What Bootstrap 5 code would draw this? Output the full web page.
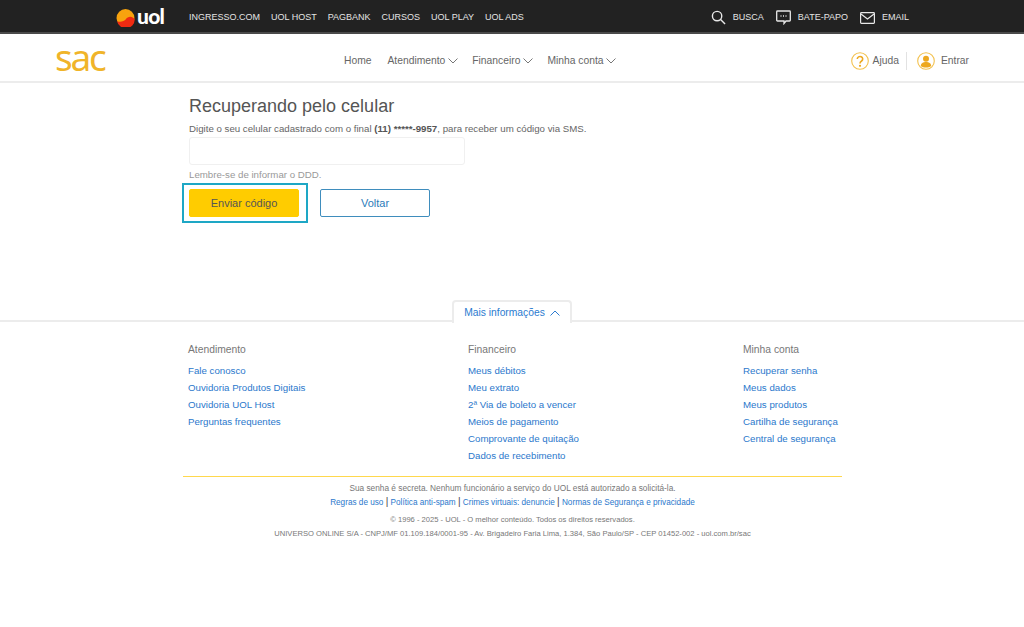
<!DOCTYPE html>
<html lang="pt-BR">
<head>
<meta charset="utf-8">
<title>SAC UOL</title>
<link href="https://cdn.jsdelivr.net/npm/bootstrap@5.3.0/dist/css/bootstrap.min.css" rel="stylesheet">
<style>
html,body{height:627px;overflow:hidden}
body{font-family:"Liberation Sans",Arial,sans-serif;color:#666;background:#fff;font-size:10.3px}
a{text-decoration:none}
.topbar{height:34px;background:#222;border-bottom:2px solid #4a4a4a;padding:3px 0 0 116px;color:#e4e4e4;font-size:9px}
.uol-logo{width:73px;gap:2px}
.uol-word{font-family:"Lato","Liberation Sans",sans-serif;font-weight:900;font-size:21px;color:#fff;letter-spacing:-.7px;line-height:1;margin-top:-4px}
.toplinks{gap:11px}
.toplinks a,.topright a{color:#e4e4e4}
.topright{margin-left:auto;margin-right:115px;gap:12px}
.topright a{display:flex;align-items:center;gap:7px}
.mainbar{height:49px;border-bottom:2px solid #ececec;padding-top:6px}
.sac-logo{font-family:"Noto Sans",sans-serif;font-size:37px;color:#f0b429;line-height:1;margin-left:55px;width:289px;margin-top:-9px;letter-spacing:-2.2px}
.mainnav{font-size:10.3px;gap:14px}
.mainnav a,.usernav a{color:#666;display:flex;align-items:center;gap:3px}
.mainnav a:first-child{margin-right:2px}
.usernav{margin-left:auto;margin-right:55px;font-size:10.3px}
.usernav a.q{gap:4px}
.usernav a.u{gap:6px}
.usernav .sepline{width:1px;height:18px;background:#e2e2e2;margin:0 10px 0 7px}
.content{padding-left:189px;height:218px}
.pagetitle{font-size:18px;font-weight:400;color:#555;margin:0;padding-top:13px;line-height:21px}
.hint{font-size:9.7px;line-height:13px;margin:5px 0 0;color:#666}
.hint b{color:#555}
.phone{display:block;width:276px;height:28px;border:1px solid #f0f0f0;border-radius:3px;margin-top:2px;background:#fff}
.ddd{font-size:9.7px;color:#999;margin:3px 0 0;line-height:13px}
.actions{margin-top:2px;margin-left:-7px;gap:12px}
.focusbox{border:2px solid #1ea7c5;padding:4px 7px 4px 5px}
.btn-send,.btn-back{width:110px;height:28px;padding:0;font-size:11px;border-radius:2px;line-height:26px}
.btn-send{background:#fc0;border:1px solid #fc0;color:#555}
.btn-back{background:#fff;border:1px solid #3f8dbd;color:#2b7bb9;margin-top:6px}
.tabline{height:21px;border-bottom:2px solid #ececec;padding-left:452px}
.moretab{display:flex;align-items:center;justify-content:center;gap:5px;width:120px;height:23px;background:#fff;border:2px solid #ececec;border-bottom:0;border-radius:4px 4px 0 0;color:#2b7bd0;font-size:10.3px;position:relative;top:-1px}
.foot-cols{padding:21px 0 0 188px;height:154px}
.foot-col h6{font-size:10.3px;font-weight:400;color:#777;margin:0 0 5px;line-height:14px}
.foot-col a{display:block;color:#2b78cc;font-size:9.7px;line-height:17px}
.c1{width:280px}.c2{width:275px}
.legal{border-top:1px solid #ffd84d;margin:0 182px 0 183px;padding-top:5px;text-align:center;font-size:8.3px;color:#777;height:70px}
.legal p{margin:0;line-height:12px}
.legal .lk{margin-top:2px;font-size:8.2px}
.legal .lk a{color:#2b78cc}
.legal .lk i{font-style:normal;color:#444;font-size:10px}
.legal .cp{margin-top:5px;font-size:7.6px}
.legal .un{margin-top:2px;font-size:7.6px}
</style>
</head>
<body>
<header class="topbar d-flex align-items-center">
  <a class="uol-logo d-flex align-items-center" href="#">
    <svg width="19" height="18" viewBox="0 0 18 17"><circle cx="9" cy="8.500" r="8.500" fill="#f8a30e"/><path d="M1 11.500a8.500 8.500 0 0 0 16.800-1.500C15.500 6 11 7 9.500 9.500 7.500 12 4 12.500 1 11.500z" fill="#ef2b12"/></svg>
    <span class="uol-word">uol</span>
  </a>
  <nav class="toplinks d-flex">
    <a href="#">INGRESSO.COM</a><a href="#">UOL HOST</a><a href="#">PAGBANK</a><a href="#">CURSOS</a><a href="#">UOL PLAY</a><a href="#">UOL ADS</a>
  </nav>
  <nav class="topright d-flex">
    <a href="#"><svg width="15" height="15" viewBox="0 0 16 16" fill="none" stroke="#e8e8e8" stroke-width="1.500"><circle cx="6.500" cy="6.500" r="5"/><path d="M10.200 10.200 15 15"/></svg>BUSCA</a>
    <a href="#"><svg width="15" height="15" viewBox="0 0 15 15" fill="none" stroke="#e8e8e8" stroke-width="1.300"><path d="M1.500 1h12a.8.8 0 0 1 .8.8v8.400a.8.8 0 0 1-.8.8H10l-2 2.500V11H1.500a.8.8 0 0 1-.8-.8V1.800a.8.8 0 0 1 .8-.8z"/><path d="M4.500 6h1M7 6h1M9.500 6h1" stroke-width="1.500"/></svg>BATE-PAPO</a>
    <a href="#"><svg width="15" height="12" viewBox="0 0 15 12" fill="none" stroke="#e8e8e8" stroke-width="1.200"><rect x=".6" y=".6" width="13.800" height="10.800" rx=".8"/><path d="m1 2 6.500 5L14 2"/></svg>EMAIL</a>
  </nav>
</header>
<div class="mainbar d-flex align-items-center">
  <a class="sac-logo" href="#">sac</a>
  <nav class="mainnav d-flex">
    <a href="#">Home</a>
    <a href="#">Atendimento <svg width="10" height="6" viewBox="0 0 10 6" fill="none" stroke="#777"><path d="m.5.500 4.500 4.500L9.500.500"/></svg></a>
    <a href="#">Financeiro <svg width="10" height="6" viewBox="0 0 10 6" fill="none" stroke="#777"><path d="m.5.500 4.500 4.500L9.500.500"/></svg></a>
    <a href="#">Minha conta <svg width="10" height="6" viewBox="0 0 10 6" fill="none" stroke="#777"><path d="m.5.500 4.500 4.500L9.500.500"/></svg></a>
  </nav>
  <nav class="usernav d-flex align-items-center">
    <a href="#" class="q"><svg width="18" height="18" viewBox="0 0 18 18"><circle cx="9" cy="9" r="8.300" fill="none" stroke="#f3c14d" stroke-width="1.100"/><path d="M6.300 7a2.700 2.500 0 1 1 4.300 2c-1 .7-1.600 1.200-1.600 2.400" fill="none" stroke="#eda81f" stroke-width="1.600"/><circle cx="9" cy="13.800" r="1.100" fill="#eda81f"/></svg>Ajuda</a>
    <span class="sepline"></span>
    <a href="#" class="u"><svg width="18" height="18" viewBox="0 0 18 18"><circle cx="9" cy="9" r="8.300" fill="none" stroke="#f3c14d" stroke-width="1.100"/><circle cx="9" cy="6.800" r="3" fill="#eda81f"/><path d="M3.800 14c0-2.800 2.400-4 5.200-4s5.200 1.200 5.200 4c-1.400 1-3.200 1.500-5.200 1.500S5.200 15 3.800 14z" fill="#eda81f"/></svg>Entrar</a>
  </nav>
</div>
<main class="content">
  <h1 class="pagetitle">Recuperando pelo celular</h1>
  <p class="hint">Digite o seu celular cadastrado com o final <b>(11) *****-9957</b>, para receber um código via SMS.</p>
  <input class="phone" type="text" aria-label="Celular">
  <p class="ddd">Lembre-se de informar o DDD.</p>
  <div class="actions d-flex align-items-start">
    <div class="focusbox"><button class="btn btn-send" type="button">Enviar código</button></div>
    <button class="btn btn-back" type="button">Voltar</button>
  </div>
</main>
<div class="tabline">
  <a class="moretab" href="#">Mais informações <svg width="10" height="6" viewBox="0 0 10 6" fill="none" stroke="#2b7bd0"><path d="M.5 5.500 5 1l4.500 4.500"/></svg></a>
</div>
<section class="foot-cols d-flex">
  <div class="foot-col c1"><h6>Atendimento</h6><a href="#">Fale conosco</a><a href="#">Ouvidoria Produtos Digitais</a><a href="#">Ouvidoria UOL Host</a><a href="#">Perguntas frequentes</a></div>
  <div class="foot-col c2"><h6>Financeiro</h6><a href="#">Meus débitos</a><a href="#">Meu extrato</a><a href="#">2ª Via de boleto a vencer</a><a href="#">Meios de pagamento</a><a href="#">Comprovante de quitação</a><a href="#">Dados de recebimento</a></div>
  <div class="foot-col"><h6>Minha conta</h6><a href="#">Recuperar senha</a><a href="#">Meus dados</a><a href="#">Meus produtos</a><a href="#">Cartilha de segurança</a><a href="#">Central de segurança</a></div>
</section>
<footer class="legal">
  <p>Sua senha é secreta. Nenhum funcionário a serviço do UOL está autorizado a solicitá-la.</p>
  <p class="lk"><a href="#">Regras de uso</a> <i>|</i> <a href="#">Política anti-spam</a> <i>|</i> <a href="#">Crimes virtuais: denuncie</a> <i>|</i> <a href="#">Normas de Segurança e privacidade</a></p>
  <p class="cp">© 1996 - 2025 - UOL - O melhor conteúdo. Todos os direitos reservados.</p>
  <p class="un">UNIVERSO ONLINE S/A - CNPJ/MF 01.109.184/0001-95 - Av. Brigadeiro Faria Lima, 1.384, São Paulo/SP - CEP 01452-002 - uol.com.br/sac</p>
</footer>
<script src="https://cdn.jsdelivr.net/npm/bootstrap@5.3.0/dist/js/bootstrap.bundle.min.js"></script>
</body>
</html>
